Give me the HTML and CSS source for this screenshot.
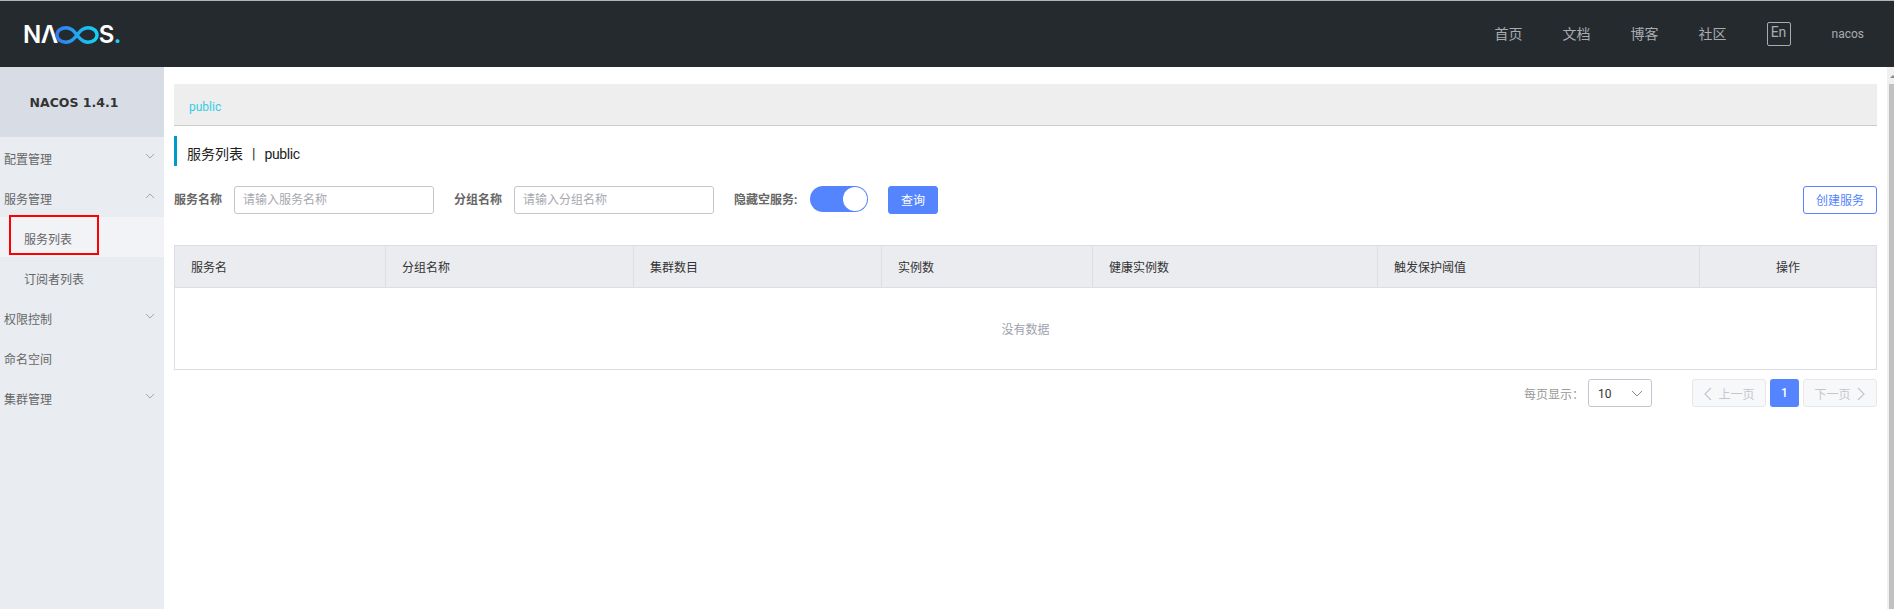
FILE: index.html
```html
<!DOCTYPE html>
<html lang="zh-CN">
<head>
<meta charset="utf-8">
<title>Nacos</title>
<link rel="stylesheet" href="styles.css">
</head>
<body>
<div class="app">
  <header class="header">
    <div class="logo" aria-label="NACOS">
      <span class="logo-text">NΛ</span>
      <svg class="logo-inf" viewBox="0 0 44 18" width="44" height="18">
        <defs>
          <linearGradient id="infg" x1="0" y1="0" x2="1" y2="0">
            <stop offset="0" stop-color="#2f7cf0"/>
            <stop offset="1" stop-color="#16d2f2"/>
          </linearGradient>
        </defs>
        <path d="M22 9C18.500 4 15.500 1.800 11 1.800 5.800 1.800 2 5 2 9s3.800 7.200 9 7.200c4.500 0 7.500-2.200 11-7.200 3.500-5 6.500-7.200 11-7.200 5.200 0 9 3.200 9 7.200s-3.800 7.200-9 7.200c-4.500 0-7.500-2.200-11-7.200z" fill="none" stroke="url(#infg)" stroke-width="3.400"/>
      </svg>
      <span class="logo-text">S<span class="logo-dot">.</span></span>
    </div>
    <nav class="top-nav">
      <a class="top-link">首页</a>
      <a class="top-link">文档</a>
      <a class="top-link">博客</a>
      <a class="top-link">社区</a>
      <span class="lang">En</span>
      <span class="user">nacos</span>
    </nav>
  </header>
  <div class="body">
    <aside class="sidebar">
      <div class="version">NACOS 1.4.1</div>
      <div class="menu-item">配置管理
        <svg class="chev" viewBox="0 0 10 6" width="10" height="6"><path d="M1 1l4 4 4-4"/></svg>
      </div>
      <div class="menu-item">服务管理
        <svg class="chev" viewBox="0 0 10 6" width="10" height="6"><path d="M1 5l4-4 4 4"/></svg>
      </div>
      <div class="menu-item sub active">服务列表</div>
      <div class="menu-item sub">订阅者列表</div>
      <div class="menu-item">权限控制
        <svg class="chev" viewBox="0 0 10 6" width="10" height="6"><path d="M1 1l4 4 4-4"/></svg>
      </div>
      <div class="menu-item">命名空间</div>
      <div class="menu-item">集群管理
        <svg class="chev" viewBox="0 0 10 6" width="10" height="6"><path d="M1 1l4 4 4-4"/></svg>
      </div>
      <div class="annotation"></div>
    </aside>
    <main class="main">
      <div class="ns-bar"><span class="ns-link">public</span></div>
      <div class="page-title"><span>服务列表</span><span class="sep">|</span><span class="title-ns">public</span></div>
      <form class="filters">
        <label class="f-label">服务名称</label>
        <input class="input" placeholder="请输入服务名称">
        <label class="f-label f-next">分组名称</label>
        <input class="input" placeholder="请输入分组名称">
        <label class="f-label f-next f-switch">隐藏空服务:</label>
        <span class="switch"><span class="knob"></span></span>
        <button type="button" class="btn btn-primary">查询</button>
        <button type="button" class="btn btn-outline">创建服务</button>
      </form>
      <table class="table">
        <colgroup>
          <col class="c1"><col class="c2"><col class="c3"><col class="c4"><col class="c5"><col class="c6"><col class="c7">
        </colgroup>
        <thead>
          <tr>
            <th>服务名</th><th>分组名称</th><th>集群数目</th><th>实例数</th><th>健康实例数</th><th>触发保护阈值</th><th class="center">操作</th>
          </tr>
        </thead>
        <tbody>
          <tr><td colspan="7" class="empty">没有数据</td></tr>
        </tbody>
      </table>
      <div class="pager">
        <span class="pager-label">每页显示：</span>
        <span class="select">10
          <svg class="select-chev" viewBox="0 0 12 7" width="12" height="7"><path d="M1 1l5 5 5-5"/></svg>
        </span>
        <span class="page-btn page-prev">
          <svg class="page-arrow" viewBox="0 0 9 14" width="9" height="14"><path d="M8 1L2 7l6 6"/></svg>上一页
        </span>
        <span class="page-num">1</span>
        <span class="page-btn">下一页
          <svg class="page-arrow" viewBox="0 0 9 14" width="9" height="14"><path d="M1 1l6 6-6 6"/></svg>
        </span>
      </div>
    </main>
    <div class="scrollbar">
      <div class="scroll-up"></div>
      <div class="scroll-thumb"></div>
    </div>
  </div>
</div>
</body>
</html>
```
FILE: styles.css
```css
* { box-sizing: border-box; }
html, body { margin: 0; height: 100%; overflow: hidden; }
body {
  font-family: Roboto, "Noto Sans CJK SC", sans-serif;
  font-size: 12px;
  color: #333;
  background: #fff;
}
.app { display: flex; flex-direction: column; height: 609px; }

.header {
  height: 67px;
  flex: none;
  background: #252a2f;
  border-top: 1px solid #b4b4b4;
  display: flex;
  align-items: center;
  justify-content: space-between;
  padding: 0 30px 0 23px;
}
.logo { display: flex; align-items: center; height: 20px; margin-top: 1px; }
.logo-text {
  font-family: Inter, sans-serif;
  font-size: 24px;
  font-weight: 600;
  line-height: 20px;
  color: #fff;
  letter-spacing: -0.5px;
}
.logo-inf { margin: 0 0 0 -3px; }
.logo-dot { color: #19d3f3; }
.top-nav { display: flex; align-items: center; color: #a8acb0; }
.top-link { font-size: 14px; margin: -2px 40px 0 0; }
.lang {
  width: 24px;
  height: 24px;
  border: 1px solid #a8acb0;
  border-radius: 2px;
  font-size: 14px;
  line-height: 19px;
  text-align: center;
  margin-right: 41px;
}
.user { font-size: 12px; }

.body { flex: 1; display: flex; min-height: 0; }
.sidebar {
  position: relative;
  width: 164px;
  flex: none;
  background: #e9ecf1;
}
.version {
  height: 70px;
  background: #d8dde5;
  display: flex;
  align-items: center;
  justify-content: center;
  font-family: "DejaVu Sans", sans-serif;
  font-size: 12.5px;
  font-weight: 700;
  color: #333;
  padding: 1px 16px 0 0;
}
.menu-item {
  height: 40px;
  line-height: 47px;
  padding-left: 4px;
  color: #666;
  font-size: 12px;
  position: relative;
}
.menu-item.sub { padding-left: 24px; }
.menu-item.active { background: #f2f3f7; }
.chev {
  position: absolute;
  right: 9px;
  top: 16px;
  fill: none;
  stroke: #a3a6ad;
  stroke-width: 1;
}
.annotation {
  position: absolute;
  left: 9px;
  top: 148px;
  width: 90px;
  height: 40px;
  border: 2px solid #f00;
}

.main { flex: 1; min-width: 0; padding: 17px 10px 0; }
.ns-bar {
  height: 42px;
  background: #eee;
  border-bottom: 1px solid #ccc;
  padding-left: 15px;
  line-height: 46px;
}
.ns-link { color: #33cde5; font-size: 12px; }
.page-title {
  height: 30px;
  margin-top: 10px;
  border-left: 3px solid #09c;
  padding-left: 10px;
  font-size: 14px;
  line-height: 37px;
  color: #222;
  display: flex;
}
.sep { margin: 0 9px; }
.title-ns { letter-spacing: -0.4px; }
.filters {
  display: flex;
  align-items: flex-start;
  margin-top: 20px;
  height: 28px;
  line-height: 29px;
}
.f-label { font-weight: 700; color: #666; white-space: nowrap; }
.f-next { margin-left: 20px; }
.f-switch { width: 64px; }
.input {
  width: 200px;
  height: 28px;
  border: 1px solid #c4c6cf;
  border-radius: 3px;
  padding: 1px 8px 0;
  font: inherit;
  outline: none;
  margin-left: 12px;
}
.input::placeholder { color: #a6a8b0; opacity: 1; }
.switch {
  width: 58px;
  height: 26px;
  border-radius: 13px;
  background: #5584ff;
  margin-left: 12px;
  flex: none;
  display: flex;
  align-items: center;
  justify-content: flex-end;
  padding-right: 1px;
}
.knob { width: 24px; height: 24px; border-radius: 50%; background: #fff; }
.btn {
  height: 28px;
  border-radius: 3px;
  font: inherit;
  padding: 0;
  cursor: pointer;
}
.btn-primary {
  width: 50px;
  margin-left: 20px;
  background: #5584ff;
  border: 1px solid #5584ff;
  color: #fff;
}
.btn-outline {
  width: 74px;
  margin-left: auto;
  background: #fff;
  border: 1px solid #5584ff;
  color: #5584ff;
}
.table {
  width: 100%;
  margin-top: 31px;
  border-collapse: collapse;
  table-layout: fixed;
  border: 1px solid #dcdee3;
}
.c1 { width: 211px; }
.c2 { width: 248px; }
.c3 { width: 248px; }
.c4 { width: 211px; }
.c5 { width: 285px; }
.c6 { width: 322px; }
.table th {
  height: 42px;
  background: #ebecf0;
  border: 1px solid #dcdee3;
  padding: 0 16px 1px;
  font-weight: 400;
  text-align: left;
  color: #333;
}
.table th.center { text-align: center; }
.empty {
  height: 82px;
  text-align: center;
  color: #a0a2ad;
  padding: 0 0 1px;
}
.pager {
  display: flex;
  align-items: center;
  justify-content: flex-end;
  height: 28px;
  margin-top: 9px;
}
.pager-label {
  color: #999;
  margin: 1px 4px 0 0;
  font-family: Roboto, "Noto Sans CJK TC", sans-serif;
}
.select {
  position: relative;
  width: 64px;
  height: 28px;
  border: 1px solid #c4c6cf;
  border-radius: 3px;
  line-height: 29px;
  padding-left: 9px;
  color: #333;
  margin-right: 40px;
}
.select-chev {
  position: absolute;
  right: 8px;
  top: 10px;
  fill: none;
  stroke: #888;
  stroke-width: 1;
}
.page-btn {
  width: 74px;
  height: 28px;
  background: #f7f8fa;
  border: 1px solid #e6e7eb;
  border-radius: 3px;
  color: #c4c6cf;
  display: flex;
  align-items: center;
  justify-content: center;
  gap: 6px;
  padding-top: 1px;
}
.page-arrow { fill: none; stroke: #c4c6cf; stroke-width: 1.2; }
.page-num {
  width: 29px;
  height: 28px;
  margin: 0 4px;
  background: #5584ff;
  color: #fff;
  border-radius: 3px;
  text-align: center;
  line-height: 28px;
  font-weight: 500;
}
.scrollbar {
  width: 7px;
  flex: none;
  background: #f0f0f0;
  padding-left: 2px;
  display: flex;
  flex-direction: column;
}
.scroll-up { height: 17px; position: relative; }
.scroll-up::after {
  content: "";
  position: absolute;
  left: 1px;
  top: 8px;
  border: 3px solid transparent;
  border-top: 0;
  border-bottom: 3px solid #8a8a8a;
}
.scroll-thumb { flex: 1; background: #c1c1c1; }
```
